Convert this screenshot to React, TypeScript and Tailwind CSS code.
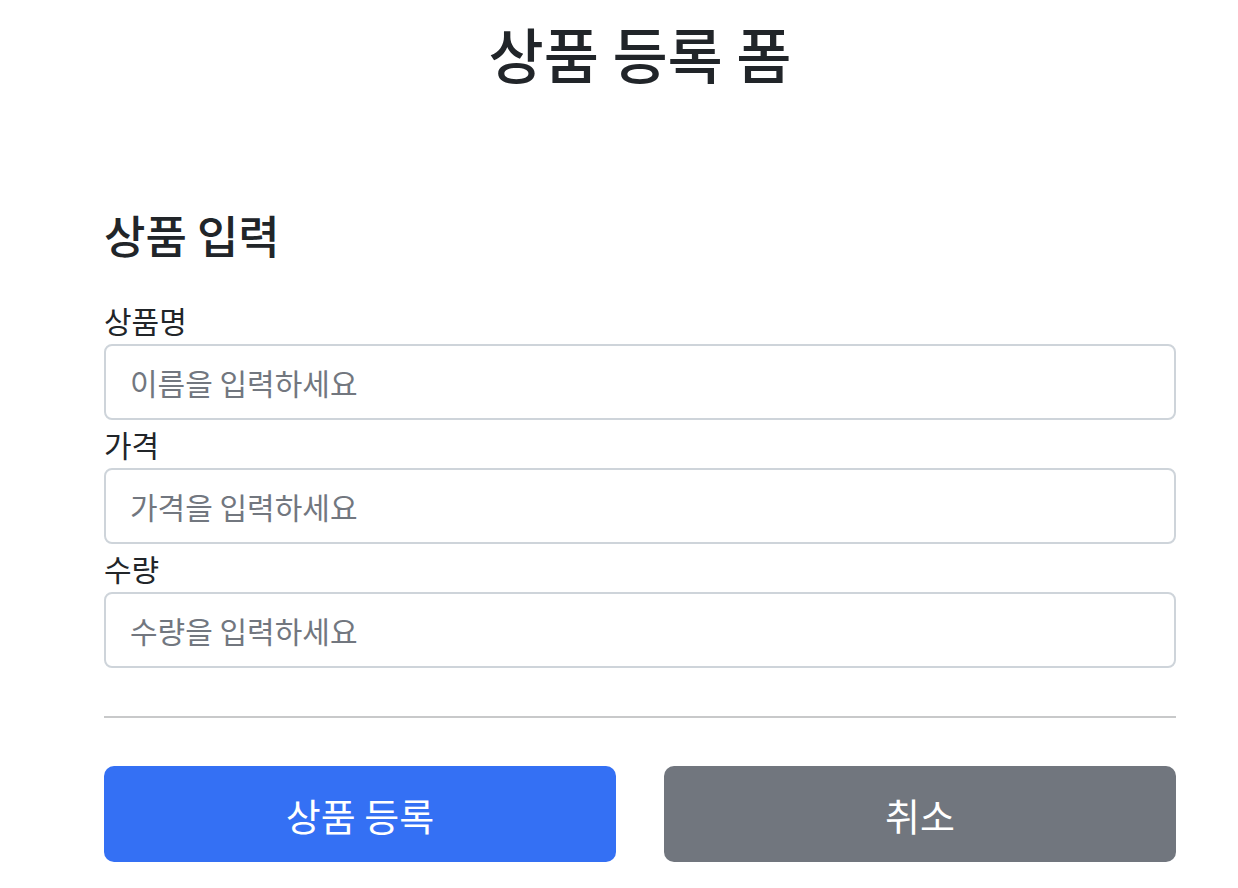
export default function App() {
  const font = { fontFamily: '"Noto Sans CJK KR", "Noto Sans", sans-serif' };
  const fields = [
    { label: '상품명', ph: '이름을 입력하세요' },
    { label: '가격', ph: '가격을 입력하세요' },
    { label: '수량', ph: '수량을 입력하세요' },
  ];
  return (
    <div className="min-h-[888px] w-[1238px] bg-white pt-[14px] text-[#212529]" style={font}>
      <div className="ml-[104px] w-[1072px]">
        <div className="pb-[96px] text-center">
          <h2 className="mb-[19px] text-[60px] font-medium leading-[77px]">상품 등록 폼</h2>
        </div>
        <h4 className="mb-[32px] text-[45px] font-medium leading-[58px]">상품 입력</h4>
        <form>
          {fields.map((f) => (
            <div key={f.label}>
              <label className="block text-[30px] leading-[48px]">{f.label}</label>
              <input
                className="block h-[76px] w-full rounded-[8px] border-2 border-[#ced4da] px-[24px] text-[30px] text-[#212529] outline-none placeholder:text-[#72777f]"
                placeholder={f.ph}
                style={font}
              />
            </div>
          ))}
          <hr className="my-[48px] border-t-2 border-[#c8c9ca]" />
          <div className="flex gap-[48px]">
            <button
              type="button"
              className="h-[96px] flex-1 rounded-[10px] bg-[#3470f4] text-[38px] text-white"
              style={font}
            >
              상품 등록
            </button>
            <button
              type="button"
              className="h-[96px] flex-1 rounded-[10px] bg-[#71767e] text-[38px] text-white"
              style={font}
            >
              취소
            </button>
          </div>
        </form>
      </div>
    </div>
  );
}
